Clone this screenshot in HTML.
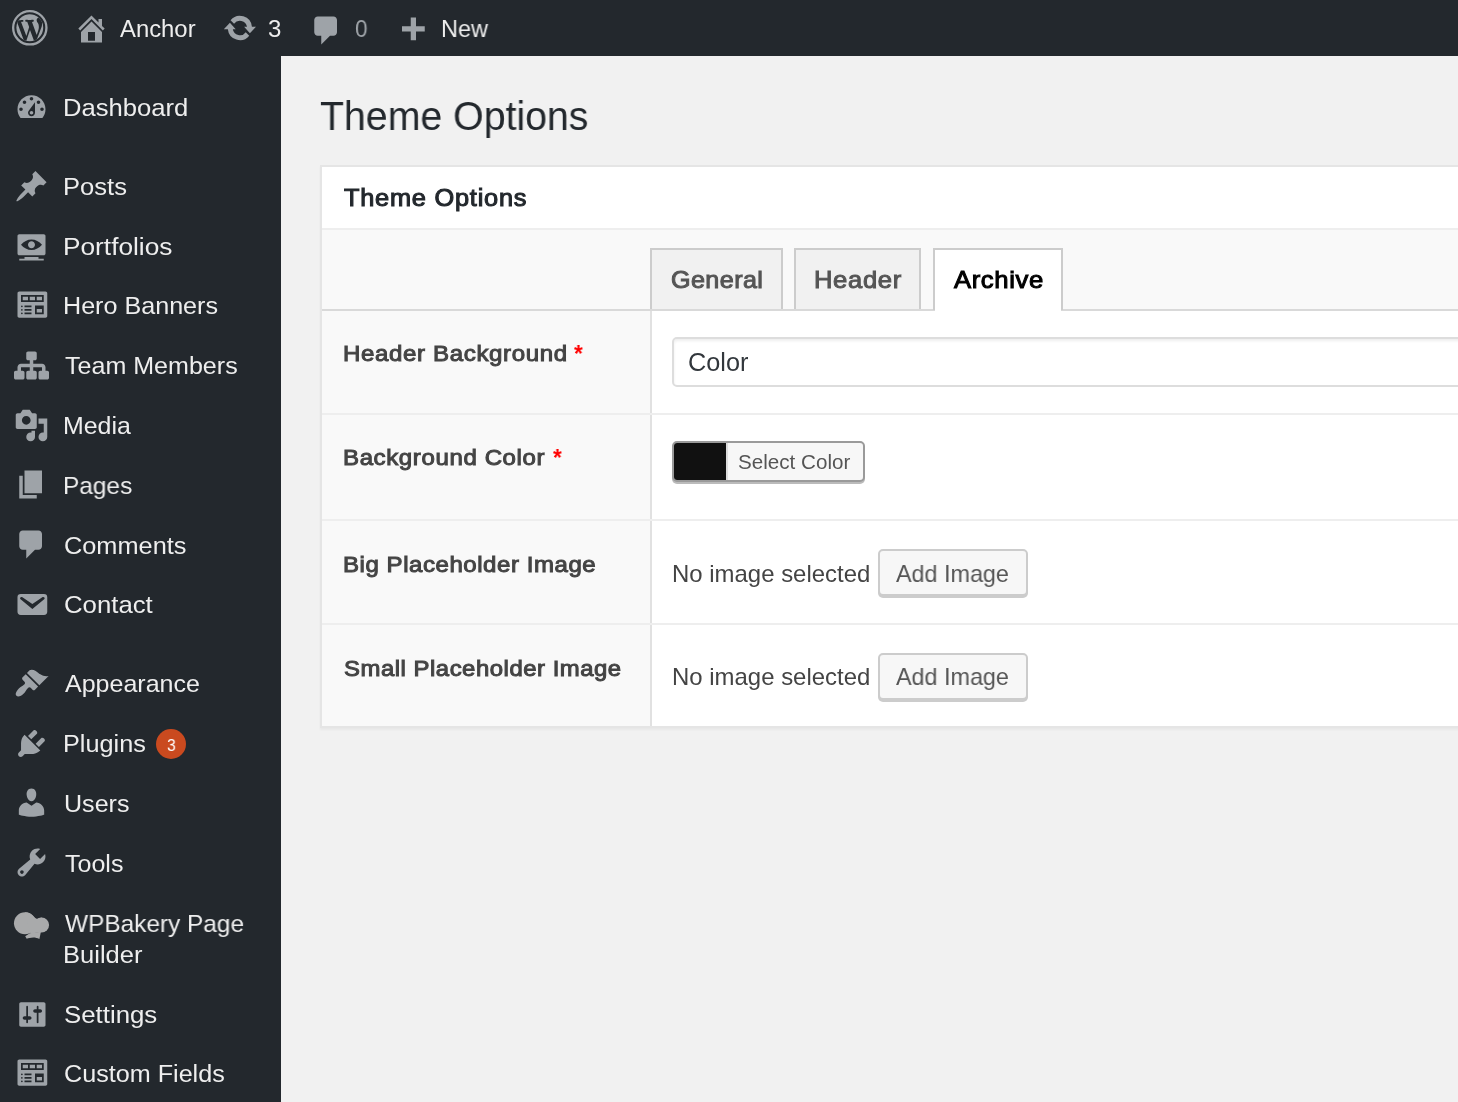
<!DOCTYPE html>
<html><head><meta charset="utf-8"><title>Theme Options</title><style>
*{margin:0;padding:0;box-sizing:border-box}
html,body{width:1458px;height:1102px;overflow:hidden;background:#f1f1f1;position:relative;font-family:"Liberation Sans",sans-serif}
.t{position:absolute;white-space:nowrap;line-height:1;z-index:10;transform-origin:0 0;will-change:transform}
#bar{position:absolute;left:0;top:0;width:1458px;height:56px;background:#23282d}
#side{position:absolute;left:0;top:56px;width:281px;height:1046px;background:#23282d}
.badge{position:absolute;width:30px;height:30px;border-radius:50%;background:#ca4a1f}
#panel{position:absolute;left:320px;top:165px;width:1200px;height:563px;background:#fff;border:2px solid #e5e5e5;box-shadow:0 2px 2px rgba(0,0,0,.04)}
#phead{position:absolute;left:322px;top:228px;width:1200px;height:2px;background:#eeeeee}
#tabwrap{position:absolute;left:322px;top:230px;width:1200px;height:80px;background:#f9f9f9}
.tab{position:absolute;top:248px;height:62px;background:#f1f1f1;border:2px solid #cccccc;border-bottom:0}
.tab.act{background:#fff;height:62px;z-index:2}
.tab.act::after{content:'';position:absolute;left:0;right:0;bottom:-2px;height:2px;background:#fff}
#tabline{position:absolute;left:322px;top:309px;width:1200px;height:2px;background:#d9d9d9;z-index:1}
.lab{position:absolute;left:322px;width:330px;background:#f9f9f9;border-right:2px solid #e1e1e1}
.rowline{position:absolute;left:322px;width:1200px;height:2px;background:#eeeeee}
#sel{position:absolute;left:672px;top:337px;width:900px;height:50px;border:2px solid #dddddd;border-radius:5px;background:#fff;box-shadow:inset 0 2px 3px rgba(0,0,0,.07)}
#cbtn{position:absolute;left:672px;top:441px;width:193px;height:41px;border:2px solid #9a9a9a;border-radius:5px;background:#f7f7f7;overflow:hidden;box-shadow:0 2px 0 #bbbbbb}
#sw{position:absolute;left:0;top:0;width:54px;height:100%;background:#111111;border-right:2px solid #dddddd}
.btn{position:absolute;width:150px;height:47px;border:2px solid #cccccc;border-radius:5px;background:#f7f7f7;box-shadow:0 2px 0 #cccccc}
svg.ic{position:absolute;z-index:10}
</style></head>
<body>
<div id="bar"></div>
<div id="side"></div>
<div class="t" id="t0" style="left:119.79px;top:18.13px;font-size:23.00px;color:#eeeeee;font-weight:400;transform:scaleX(1.0370);">Anchor</div>
<div class="t" id="t1" style="left:268.04px;top:17.28px;font-size:24.00px;color:#eeeeee;font-weight:400;transform:scaleX(0.9750);">3</div>
<div class="t" id="t2" style="left:355.43px;top:17.28px;font-size:24.00px;color:#a0a5aa;font-weight:400;transform:scaleX(0.9417);">0</div>
<div class="t" id="t3" style="left:440.62px;top:17.45px;font-size:23.80px;color:#eeeeee;font-weight:400;transform:scaleX(0.9848);">New</div>
<div class="t" id="t4" style="left:63.33px;top:95.71px;font-size:24.80px;color:#eeeeee;font-weight:400;transform:scaleX(1.0331);">Dashboard</div>
<div class="t" id="t5" style="left:63.33px;top:175.01px;font-size:24.80px;color:#eeeeee;font-weight:400;transform:scaleX(1.0305);">Posts</div>
<div class="t" id="t6" style="left:63.28px;top:234.81px;font-size:24.80px;color:#eeeeee;font-weight:400;transform:scaleX(1.0584);">Portfolios</div>
<div class="t" id="t7" style="left:63.36px;top:294.31px;font-size:24.80px;color:#eeeeee;font-weight:400;transform:scaleX(1.0133);">Hero Banners</div>
<div class="t" id="t8" style="left:65.39px;top:354.11px;font-size:24.80px;color:#eeeeee;font-weight:400;transform:scaleX(1.0106);">Team Members</div>
<div class="t" id="t9" style="left:63.38px;top:413.91px;font-size:24.80px;color:#eeeeee;font-weight:400;transform:scaleX(1.0045);">Media</div>
<div class="t" id="t10" style="left:63.41px;top:473.71px;font-size:24.80px;color:#eeeeee;font-weight:400;transform:scaleX(0.9853);">Pages</div>
<div class="t" id="t11" style="left:64.37px;top:533.51px;font-size:24.80px;color:#eeeeee;font-weight:400;transform:scaleX(1.0212);">Comments</div>
<div class="t" id="t12" style="left:64.36px;top:593.31px;font-size:24.80px;color:#eeeeee;font-weight:400;transform:scaleX(1.0388);">Contact</div>
<div class="t" id="t13" style="left:65.39px;top:672.11px;font-size:24.80px;color:#eeeeee;font-weight:400;transform:scaleX(1.0090);">Appearance</div>
<div class="t" id="t14" style="left:63.35px;top:731.91px;font-size:24.80px;color:#eeeeee;font-weight:400;transform:scaleX(1.0190);">Plugins</div>
<div class="t" id="t15" style="left:64.38px;top:791.71px;font-size:24.80px;color:#eeeeee;font-weight:400;transform:scaleX(1.0111);">Users</div>
<div class="t" id="t16" style="left:65.39px;top:851.51px;font-size:24.80px;color:#eeeeee;font-weight:400;transform:scaleX(1.0088);">Tools</div>
<div class="t" id="t17" style="left:65.38px;top:911.81px;font-size:24.80px;color:#eeeeee;font-weight:400;transform:scaleX(0.9840);">WPBakery Page</div>
<div class="t" id="t18" style="left:63.33px;top:943.21px;font-size:24.80px;color:#eeeeee;font-weight:400;transform:scaleX(1.0293);">Builder</div>
<div class="t" id="t19" style="left:64.35px;top:1002.81px;font-size:24.80px;color:#eeeeee;font-weight:400;transform:scaleX(1.0409);">Settings</div>
<div class="t" id="t20" style="left:64.38px;top:1062.31px;font-size:24.80px;color:#eeeeee;font-weight:400;transform:scaleX(1.0146);">Custom Fields</div>
<div class="badge" style="left:156.3px;top:729px;"></div>
<div class="t" id="t21" style="left:166.61px;top:737.26px;font-size:17.30px;color:#ffffff;font-weight:400;transform:scaleX(0.9111);">3</div>
<div class="t" id="t22" style="left:320.40px;top:96.13px;font-size:40.60px;color:#23282d;font-weight:400;transform:scaleX(0.9678);">Theme Options</div>
<div id="panel"></div>
<div id="phead"></div>
<div class="t" id="t23" style="left:343.78px;top:187.18px;font-size:23.30px;color:#23282d;font-weight:400;transform:scaleX(1.0875);letter-spacing:0.711px;-webkit-text-stroke:1.0px currentColor;">Theme Options</div>
<div id="tabwrap"></div>
<div class="tab" style="left:650px;width:133px;"></div>
<div class="tab" style="left:794px;width:127px;"></div>
<div class="tab act" style="left:933px;width:130px;"></div>
<div id="tabline"></div>
<div class="t" id="t24" style="left:670.59px;top:267.98px;font-size:24.00px;color:#555555;font-weight:400;transform:scaleX(1.0459);letter-spacing:0.414px;-webkit-text-stroke:1.0px currentColor;">General</div>
<div class="t" id="t25" style="left:813.94px;top:267.98px;font-size:24.00px;color:#555555;font-weight:400;transform:scaleX(1.0646);letter-spacing:0.631px;-webkit-text-stroke:1.0px currentColor;">Header</div>
<div class="t" id="t26" style="left:953.65px;top:267.98px;font-size:24.00px;color:#000000;font-weight:400;transform:scaleX(1.0681);letter-spacing:0.574px;-webkit-text-stroke:1.0px currentColor;">Archive</div>
<div class="lab" style="top:310.0px;height:103.6px"></div>
<div class="lab" style="top:413.6px;height:106.8px"></div>
<div class="rowline" style="top:412.6px"></div>
<div class="lab" style="top:520.4px;height:103.9px"></div>
<div class="rowline" style="top:519.4px"></div>
<div class="lab" style="top:624.3px;height:101.7px"></div>
<div class="rowline" style="top:623.3px"></div>
<div class="t" id="t27" style="left:342.92px;top:343.32px;font-size:22.30px;color:#444444;font-weight:400;transform:scaleX(1.0783);letter-spacing:0.596px;-webkit-text-stroke:1.0px currentColor;">Header Background</div>
<div class="t" id="t28" style="left:574.37px;top:342.41px;font-size:24.20px;color:#ff0000;font-weight:700;transform:scaleX(0.9300);">*</div>
<div class="t" id="t29" style="left:342.92px;top:446.92px;font-size:22.30px;color:#444444;font-weight:400;transform:scaleX(1.0775);letter-spacing:0.569px;-webkit-text-stroke:1.0px currentColor;">Background Color</div>
<div class="t" id="t30" style="left:553.37px;top:446.01px;font-size:24.20px;color:#ff0000;font-weight:700;transform:scaleX(0.9300);">*</div>
<div class="t" id="t31" style="left:342.92px;top:553.82px;font-size:22.30px;color:#444444;font-weight:400;transform:scaleX(1.0759);letter-spacing:0.524px;-webkit-text-stroke:1.0px currentColor;">Big Placeholder Image</div>
<div class="t" id="t32" style="left:344.00px;top:657.52px;font-size:22.30px;color:#444444;font-weight:400;transform:scaleX(1.0709);letter-spacing:0.497px;-webkit-text-stroke:1.0px currentColor;">Small Placeholder Image</div>
<div id="sel"></div>
<div class="t" id="t33" style="left:687.59px;top:350.27px;font-size:25.20px;color:#32373c;font-weight:400;transform:scaleX(1.0034);">Color</div>
<div id="cbtn"><div id="sw"></div></div>
<div class="t" id="t34" style="left:738.30px;top:452.86px;font-size:19.30px;color:#555555;font-weight:400;transform:scaleX(1.0692);">Select Color</div>
<div class="t" id="t35" style="left:671.58px;top:561.55px;font-size:23.80px;color:#444444;font-weight:400;transform:scaleX(1.0062);">No image selected</div>
<div class="btn" style="left:877.6px;top:549.1px"></div>
<div class="t" id="t36" style="left:896.20px;top:561.55px;font-size:23.80px;color:#555555;font-weight:400;transform:scaleX(0.9816);">Add Image</div>
<div class="t" id="t37" style="left:671.58px;top:665.35px;font-size:23.80px;color:#444444;font-weight:400;transform:scaleX(1.0062);">No image selected</div>
<div class="btn" style="left:877.6px;top:652.9px"></div>
<div class="t" id="t38" style="left:896.20px;top:665.35px;font-size:23.80px;color:#555555;font-weight:400;transform:scaleX(0.9816);">Add Image</div>
<svg class="ic" style="left:12.0px;top:10.3px" width="35.6" height="35.6" viewBox="0 0 20 20"><defs><clipPath id="wpc"><circle cx="10" cy="10" r="7.55"/></clipPath></defs><circle cx="10" cy="10" r="9.35" fill="none" stroke="#9ea3a8" stroke-width="1.3"/><circle cx="10" cy="10" r="7.55" fill="#9ea3a8"/><g clip-path="url(#wpc)"><path fill="#23282d" transform="translate(10 10) scale(0.87) translate(-10 -10)" d="M20 10c0-5.51-4.49-10-10-10C4.48 0 0 4.49 0 10c0 5.52 4.48 10 10 10 5.51 0 10-4.48 10-10zM7.78 15.37L4.37 6.22c.55-.02 1.17-.08 1.17-.08.5-.06.44-1.13-.06-1.11 0 0-1.45.11-2.37.11-.18 0-.37 0-.58-.01C4.12 2.690 6.87 1.11 10 1.11c2.33 0 4.45.87 6.05 2.34-.68-.11-1.650.39-1.65 1.58 0 .74.45 1.36.9 2.1.35.61.55 1.36.55 2.46 0 1.49-1.4 5-1.4 5l-3.03-8.37c.54-.02.82-.17.82-.17.5-.05.44-1.25-.06-1.22 0 0-1.44.12-2.38.12-.87 0-2.33-.12-2.33-.12-.5-.03-.56 1.2-.06 1.22l.92.08 1.26 3.41zM17.41 10c.24-.64.74-1.87.43-4.25.7 1.29 1.05 2.71 1.05 4.25 0 3.29-1.73 6.240-4.4 7.78.97-2.59 1.94-5.2 2.92-7.78zM6.1 18.09C3.12 16.65 1.11 13.53 1.11 10c0-1.3.23-2.48.72-3.59.76 2.06 1.49 4.12 2.23 6.17.69 1.87 1.35 3.74 2.04 5.51zm4.03-6.63l2.58 6.98c-.86.29-1.76.45-2.710.45-.79 0-1.57-.11-2.29-.33.81-2.38 1.62-4.74 2.42-7.1z"/></g></svg>
<svg class="ic" style="left:74.00px;top:10.60px" width="35" height="35" viewBox="0 0 20 20"><path fill="#9ea3a8" d="M16 8.5l1.53 1.53-1.06 1.06L10 4.62l-6.47 6.47-1.06-1.06L10 2.5l4 4v-2h2v4zm-6-2.46l6 5.99V18H4v-5.97zM12 17v-5H8v5h4z"/></svg>
<svg class="ic" style="left:220px;top:12px" width="40" height="32" viewBox="0 0 40 32"><path fill="#9ea3a8" d="M10.56 8.25A12.1 12.1 0 0 1 31.94 14.7L36 14.7L29.9 21.2L24.1 14.7L26.99 14.7A7.2 7.2 0 0 0 14.05 11.75ZM29.24 23.65A12.1 12.1 0 0 1 7.86 17.2L3.8 17.2L9.9 10.7L15.7 17.2L12.81 17.2A7.2 7.2 0 0 0 25.75 20.15Z"/></svg>
<svg class="ic" style="left:308.50px;top:12.50px" width="35" height="35" viewBox="0 0 20 20"><path fill="#9ea3a8" d="M5 2h9c1.1 0 2 .9 2 2v7c0 1.1-.9 2-2 2h-2l-5 5v-5H5c-1.1 0-2-.9-2-2V4c0-1.1.9-2 2-2z"/></svg>
<svg class="ic" style="left:395.00px;top:13.80px" width="35" height="35" viewBox="0 0 20 20"><path fill="#9ea3a8" d="M17 7v3h-5v5H9v-5H4V7h5V2h3v5h5z"/></svg>
<svg class="ic" style="left:14.00px;top:90.20px" width="35" height="35" viewBox="0 0 20 20"><path fill="#9ea3a8" d="M3.76 16h12.48c1.1-1.37 1.76-3.11 1.76-5 0-4.42-3.58-8-8-8s-8 3.58-8 8c0 1.89.66 3.63 1.76 5zM10 4c.55 0 1 .45 1 1s-.45 1-1 1-1-.45-1-1 .45-1 1-1zM6 6c.55 0 1 .45 1 1s-.45 1-1 1-1-.45-1-1 .45-1 1-1zm8 0c.55 0 1 .45 1 1s-.45 1-1 1-1-.45-1-1 .45-1 1-1zm-5.37 5.55L12 7v6c0 1.1-.9 2-2 2s-2-.9-2-2c0-.57.24-1.08.63-1.45zM4 10c.55 0 1 .45 1 1s-.45 1-1 1-1-.45-1-1 .45-1 1-1zm12 0c.55 0 1 .45 1 1s-.45 1-1 1-1-.45-1-1 .45-1 1-1zm-5 3c0-.55-.45-1-1-1s-1 .45-1 1 .45 1 1 1 1-.45 1-1z"/></svg>
<svg class="ic" style="left:14.00px;top:168.70px" width="35" height="35" viewBox="0 0 20 20"><path fill="#9ea3a8" d="M10.44 3.02l1.82-1.82 6.36 6.35-1.83 1.82c-1.05-.68-2.48-.57-3.41.36l-.75.75c-.92.93-1.04 2.35-.35 3.41l-1.830 1.82-2.41-2.41-2.8 2.79c-.42.42-3.38 2.71-3.8 2.29s1.86-3.39 2.28-3.81l2.79-2.79L4.1 9.36l1.83-1.82c1.05.69 2.48.57 3.4-.36l.75-.75c.93-.92 1.05-2.35.36-3.41z"/></svg>
<svg class="ic" style="left:14.00px;top:228.50px" width="35" height="35" viewBox="0 0 20 20"><path fill="#9ea3a8" d="M18 14V4c0-.55-.45-1-1-1H3c-.55 0-1 .45-1 1v10c0 .55.45 1 1 1h14c.55 0 1-.45 1-1zm-8-8c2.3 0 4.4 1.14 6 3-1.6 1.86-3.7 3-6 3s-4.4-1.14-6-3c1.6-1.86 3.7-3 6-3zm2 3c0-1.1-.9-2-2-2s-2 .9-2 2 .9 2 2 2 2-.9 2-2zm2 8h3v1H3v-1h3v-1h8v1z"/></svg>
<svg class="ic" style="left:14.00px;top:288.00px" width="35" height="35" viewBox="0 0 20 20"><path fill="#9ea3a8" d="M19 16V3c0-.55-.45-1-1-1H3c-.55 0-1 .45-1 1v13c0 .55.45 1 1 1h15c.55 0 1-.45 1-1zM4 4h13v4H4V4zm1 1v2h3V5H5zm4 0v2h3V5H9zm4 0v2h3V5h-3zm-8.5 5c.28 0 .5.22.5.5s-.22.5-.5.5-.5-.22-.5-.5.22-.5.5-.5zM6 10h4v1H6v-1zm6 0h5v5h-5v-5zm-7.5 2c.28 0 .5.22.5.5s-.22.5-.5.5-.5-.22-.5-.5.22-.5.5-.5zM6 12h4v1H6v-1zm7 0v2h3v-2h-3zm-8.5 2c.28 0 .5.22.5.5s-.22.5-.5.5-.5-.22-.5-.5.22-.5.5-.5zM6 14h4v1H6v-1z"/></svg>
<svg class="ic" style="left:14.00px;top:347.80px" width="35" height="35" viewBox="0 0 20 20"><path fill="#9ea3a8" d="M18 13h1c.55 0 1 .45 1 1.01v2.98c0 .56-.45 1.01-1 1.01h-4c-.55 0-1-.45-1-1.01v-2.98c0-.56.45-1.01 1-1.01h1v-2h-5v2h1c.55 0 1 .45 1 1.01v2.98c0 .56-.45 1.01-1 1.01H8c-.55 0-1-.45-1-1.01v-2.98c0-.56.45-1.01 1-1.01h1v-2H4v2h1c.55 0 1 .45 1 1.01v2.98C6 17.55 5.55 18 5 18H1c-.55 0-1-.45-1-1.01v-2.98C0 13.45.45 13 1 13h1v-2c0-1.1.9-2 2-2h5V7H8c-.55 0-1-.45-1-1.01V3.01C7 2.45 7.45 2 8 2h4c.55 0 1 .45 1 1.01v2.98C13 6.55 12.55 7 12 7h-1v2h5c1.1 0 2 .9 2 2v2z"/></svg>
<svg class="ic" style="left:14.00px;top:407.60px" width="35" height="35" viewBox="0 0 20 20"><path fill="#9ea3a8" d="M13 11V4c0-.55-.45-1-1-1h-1.67L9 1H5L3.67 3H2c-.55 0-1 .45-1 1v7c0 .55.45 1 1 1h10c.55 0 1-.45 1-1zM7 4.5c1.38 0 2.5 1.12 2.5 2.5S8.38 9.5 7 9.5 4.5 8.38 4.5 7 5.62 4.5 7 4.5zM14 6h5v10.5c0 1.38-1.12 2.5-2.5 2.5S14 17.88 14 16.5s1.12-2.5 2.5-2.5c.17 0 .34.02.5.05V9h-3V6zm-4 8.05V13h2v3.5c0 1.38-1.12 2.5-2.5 2.5S7 17.88 7 16.5 8.12 14 9.5 14c.17 0 .34.02.5.05z"/></svg>
<svg class="ic" style="left:14.00px;top:467.40px" width="35" height="35" viewBox="0 0 20 20"><path fill="#9ea3a8" d="M6 15V2h10v13H6zm-1 1h8v2H3V5h2v11z"/></svg>
<svg class="ic" style="left:14.00px;top:527.20px" width="35" height="35" viewBox="0 0 20 20"><path fill="#9ea3a8" d="M5 2h9c1.1 0 2 .9 2 2v7c0 1.1-.9 2-2 2h-2l-5 5v-5H5c-1.1 0-2-.9-2-2V4c0-1.1.9-2 2-2z"/></svg>
<svg class="ic" style="left:14.00px;top:587.00px" width="35" height="35" viewBox="0 0 20 20"><path fill="#9ea3a8" d="M3.87 4h13.25C18.37 4 19 4.59 19 5.79v8.42c0 1.19-.63 1.79-1.88 1.79H3.87c-1.25 0-1.88-.6-1.88-1.79V5.79c0-1.2.63-1.79 1.880-1.79zm6.62 8.6l6.74-5.53c.24-.2.43-.66.13-1.07-.29-.41-.82-.42-1.17-.17l-5.7 3.86L4.8 5.83c-.35-.25-.88-.24-1.17.17-.3.41-.11.87.13 1.07z"/></svg>
<svg class="ic" style="left:14.00px;top:665.80px" width="35" height="35" viewBox="0 0 20 20"><path fill="#9ea3a8" d="M14.48 11.06L7.41 3.99l1.5-1.5c.5-.56 2.3-.47 3.51.32 1.21.8 1.43 1.28 2.91 2.1 1.18.64 2.45 1.26 4.45.85zm-.71.71L6.7 4.7 4.93 6.47c-.39.39-.39 1.02 0 1.41l1.06 1.06c.39.39.39 1.03 0 1.42-.6.6-1.43 1.11-2.21 1.69-.35.26-.7.53-1.01.84C1.43 14.23.4 16.08 1.4 17.07c.99 1 2.84-.03 4.18-1.36.31-.31.58-.66.85-1.02.57-.78 1.08-1.610 1.69-2.21.39-.39 1.02-.39 1.41 0l1.06 1.06c.39.39 1.02.39 1.41 0z"/></svg>
<svg class="ic" style="left:14.00px;top:725.60px" width="35" height="35" viewBox="0 0 20 20"><path fill="#9ea3a8" d="M13.11 4.36L9.87 7.6 8 5.73l3.24-3.24c.35-.34 1.05-.2 1.56.32.52.51.66 1.21.31 1.55zm-8 1.77l.91-1.12 9.01 9.01-1.19.84c-.71.71-2.63 1.16-3.82 1.16H6.14L4.9 17.26c-.59.59-1.54.59-2.12 0-.59-.58-.59-1.53 0-2.12l1.24-1.24v-3.88c0-1.13.4-3.19 1.09-3.89zm7.26 3.97l3.24-3.24c.34-.35 1.04-.21 1.55.31.52.51.66 1.21.31 1.55l-3.24 3.25z"/></svg>
<svg class="ic" style="left:14.00px;top:785.40px" width="35" height="35" viewBox="0 0 20 20"><path fill="#9ea3a8" d="M10 9.25c-2.27 0-2.73-3.44-2.73-3.44C7 4.02 7.82 2 9.97 2c2.16 0 2.98 2.02 2.71 3.81 0 0-.41 3.44-2.68 3.44zm0 2.57L12.72 10c2.39 0 4.52 2.33 4.52 4.53v2.49s-3.65 1.13-7.24 1.13c-3.65 0-7.24-1.13-7.24-1.13v-2.49c0-2.25 1.94-4.48 4.47-4.48z"/></svg>
<svg class="ic" style="left:14.00px;top:845.20px" width="35" height="35" viewBox="0 0 20 20"><path fill="#9ea3a8" d="M16.68 9.77c-1.34 1.34-3.3 1.67-4.95.99l-5.41 6.52c-.99.99-2.59.99-3.58 0s-.99-2.59 0-3.57l6.52-5.42c-.68-1.65-.35-3.61.99-4.95 1.28-1.28 3.12-1.62 4.72-1.06l-2.89 2.89 2.82 2.82 2.86-2.87c.53 1.58.18 3.39-1.08 4.65zM3.810 16.21c.4.39 1.04.39 1.43 0 .4-.4.4-1.04 0-1.43-.39-.4-1.03-.4-1.43 0-.39.39-.39 1.03 0 1.43z"/></svg>
<svg class="ic" style="left:14.00px;top:996.50px" width="35" height="35" viewBox="0 0 20 20"><path fill="#9ea3a8" d="M18 16V4c0-.55-.45-1-1-1H4c-.55 0-1 .45-1 1v12c0 .55.45 1 1 1h13c.55 0 1-.45 1-1zM8 11h1c.55 0 1 .45 1 1s-.45 1-1 1H8v1.5c0 .28-.22.5-.5.5s-.5-.22-.5-.5V13H6c-.55 0-1-.45-1-1s.45-1 1-1h1V5.5c0-.28.22-.5.5-.5s.5.22.5.5V11zm5-2h-1c-.55 0-1-.45-1-1s.45-1 1-1h1V5.5c0-.28.22-.5.5-.5s.5.22.5.5V7h1c.55 0 1 .45 1 1s-.45 1-1 1h-1v5.5c0 .28-.22.5-.5.5s-.5-.22-.5-.5V9z"/></svg>
<svg class="ic" style="left:14.00px;top:1056.00px" width="35" height="35" viewBox="0 0 20 20"><path fill="#9ea3a8" d="M19 16V3c0-.55-.45-1-1-1H3c-.55 0-1 .45-1 1v13c0 .55.45 1 1 1h15c.55 0 1-.45 1-1zM4 4h13v4H4V4zm1 1v2h3V5H5zm4 0v2h3V5H9zm4 0v2h3V5h-3zm-8.5 5c.28 0 .5.22.5.5s-.22.5-.5.5-.5-.22-.5-.5.22-.5.5-.5zM6 10h4v1H6v-1zm6 0h5v5h-5v-5zm-7.5 2c.28 0 .5.22.5.5s-.22.5-.5.5-.5-.22-.5-.5.22-.5.5-.5zM6 12h4v1H6v-1zm7 0v2h3v-2h-3zm-8.5 2c.28 0 .5.22.5.5s-.22.5-.5.5-.5-.22-.5-.5.22-.5.5-.5zM6 14h4v1H6v-1z"/></svg>
<svg class="ic" style="left:8px;top:900px" width="50" height="50" viewBox="0 0 50 50"><g fill="#a9aaab"><circle cx="17" cy="23.2" r="11.05"/><circle cx="33.6" cy="25" r="7.5"/><path d="M17 12.2 C21 12.2 23.5 14 26 16.8 C27.5 18.4 28.6 19 29.6 18.8 L33.6 17.5 L37 25 L33 32.2 L22.5 33.6 Z"/><path d="M17.2 36.3 L21.8 33.2 L32.9 31.8 L31.4 39 C29 37.9 27 37.4 25.2 37.5 C22.6 37.6 20.5 38.1 18.7 38.7 Z"/></g></svg>
</body></html>
